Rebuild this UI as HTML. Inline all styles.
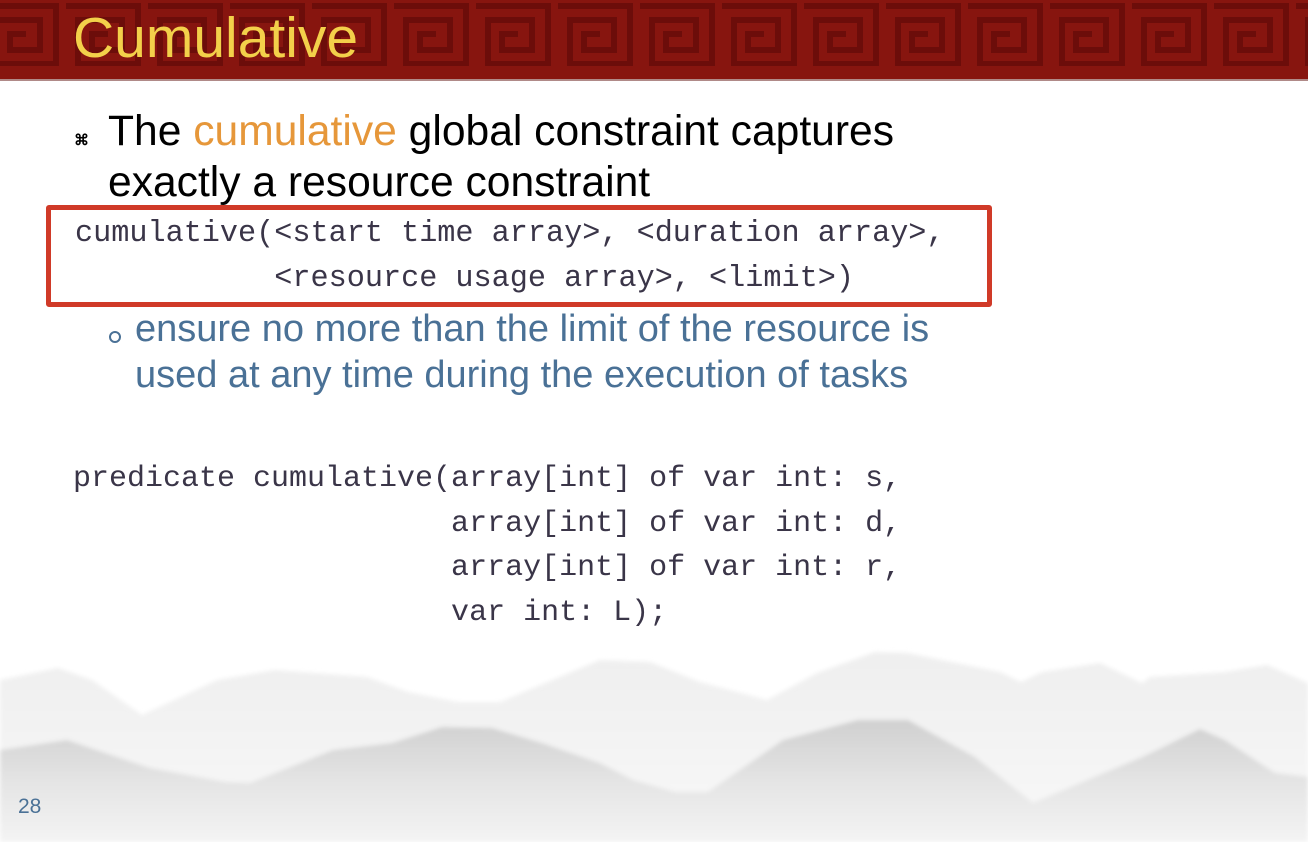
<!DOCTYPE html>
<html><head><meta charset="utf-8">
<style>
html,body{margin:0;padding:0}
body{width:1308px;height:842px;position:relative;overflow:hidden;background:#fff;font-family:"Liberation Sans",sans-serif}
.title{position:absolute;left:73px;top:4px;font-size:57px;color:#f3d04a;line-height:68px}
.t{position:absolute;font-size:42.6px;color:#000;line-height:50px;white-space:nowrap}
.sub{position:absolute;font-size:38px;color:#4a7196;line-height:46px;white-space:nowrap}
.mono{position:absolute;font-family:"Liberation Mono",monospace;font-size:30.2px;color:#3a3548;white-space:pre;line-height:44.5px}
.box{position:absolute;left:46px;top:205px;width:936px;height:92px;border:5px solid #d03a28;border-radius:3px}
</style></head><body>
<svg style="position:absolute;left:0;top:0" width="1308" height="842">
<defs>
<pattern id="mz" x="-20" y="0" width="82" height="80" patternUnits="userSpaceOnUse">
<path d="M4 6 H76 V64 H16 V20 H60 V50 H30 V34 H46" fill="none" stroke="#6c0d0a" stroke-width="6"/>
</pattern>
<linearGradient id="g1" x1="0" y1="0" x2="0" y2="1"><stop offset="0" stop-color="#efefef"/><stop offset="1" stop-color="#f8f8f8"/></linearGradient>
<linearGradient id="g2" x1="0" y1="0" x2="0" y2="1"><stop offset="0" stop-color="#d0d0d0"/><stop offset="0.5" stop-color="#e4e4e4"/><stop offset="1" stop-color="#f4f4f4"/></linearGradient>
<filter id="bl"><feGaussianBlur stdDeviation="2"/></filter>
</defs>
<rect x="0" y="0" width="1308" height="80" fill="#87150f"/>
<rect x="0" y="0" width="1308" height="66" fill="url(#mz)"/>
<rect x="0" y="79" width="1308" height="2" fill="#b08a88"/>
<g filter="url(#bl)">
<path d="M0 680 L58 668 L92 680 L142 715 L217 680 L275 670 L367 677 L408 692 L458 702 L500 702 L600 660 L650 662 L700 682 L767 700 L817 673 L875 652 L908 653 L1000 672 L1021 682 L1042 672 L1100 663 L1142 683 L1150 677 L1225 672 L1267 665 L1308 683 L1308 842 L0 842Z" fill="url(#g1)"/>
<path d="M0 750 L67 740 L150 768 L225 782 L250 783 L333 750 L392 743 L442 727 L492 728 L542 743 L600 763 L633 780 L675 792 L708 792 L783 740 L858 720 L908 720 L975 757 L1033 803 L1092 778 L1142 757 L1200 729 L1225 740 L1275 773 L1308 777 L1308 842 L0 842Z" fill="url(#g2)"/>
</g>
</svg>
<div class="title">Cumulative</div>
<div style="position:absolute;left:74px;top:131px;font-size:15px;font-weight:bold;color:#000">⌘</div>
<div class="t" style="left:108px;top:106px">The <span style="color:#e6973a">cumulative</span> global constraint captures</div>
<div class="t" style="left:108px;top:157px">exactly a resource constraint</div>
<div class="box"></div>
<div class="mono" style="left:75px;top:212px">cumulative(&lt;start time array&gt;, &lt;duration array&gt;,</div>
<div class="mono" style="left:75px;top:257px">           &lt;resource usage array&gt;, &lt;limit&gt;)</div>
<div style="position:absolute;left:109px;top:331px;width:8px;height:8px;border:2px solid #4a7196;border-radius:50%"></div>
<div class="sub" style="left:135px;top:306px">ensure no more than the limit of the resource is</div>
<div class="sub" style="left:135px;top:352px">used at any time during the execution of tasks</div>
<div class="mono" style="left:73px;top:457px;font-size:30px">predicate cumulative(array[int] of var int: s,
                     array[int] of var int: d,
                     array[int] of var int: r,
                     var int: L);</div>
<div style="position:absolute;left:18px;top:795px;font-size:21px;color:#4a7196">28</div>
</body></html>
